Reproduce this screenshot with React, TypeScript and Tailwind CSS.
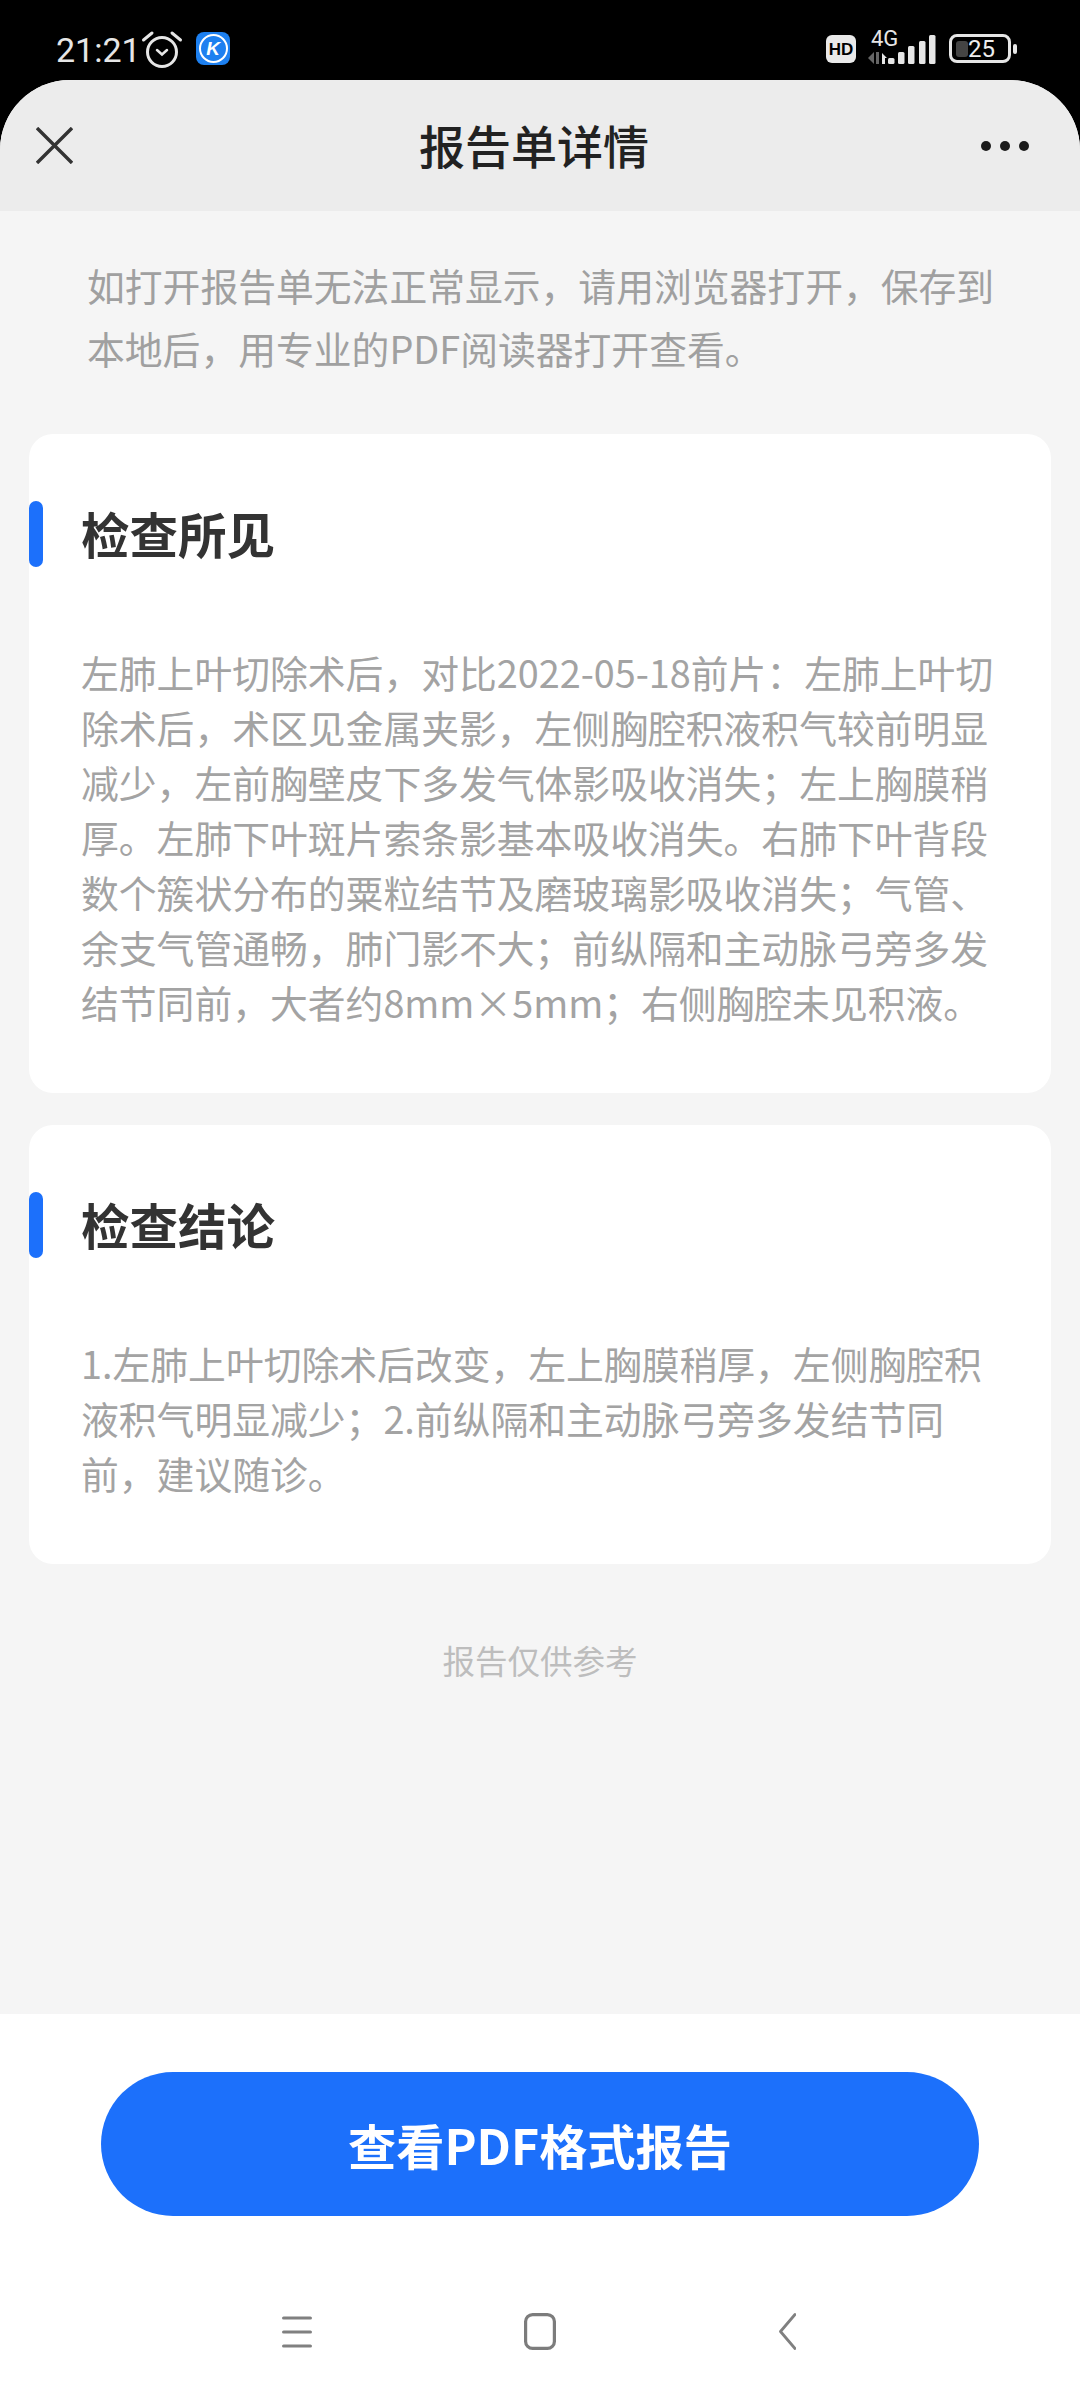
const FONT = "font-['Noto_Sans_CJK_SC','Noto_Sans',sans-serif]";

const findings = [
  "左肺上叶切除术后，对比2022-05-18前片：左肺上叶切",
  "除术后，术区见金属夹影，左侧胸腔积液积气较前明显",
  "减少，左前胸壁皮下多发气体影吸收消失；左上胸膜稍",
  "厚。左肺下叶斑片索条影基本吸收消失。右肺下叶背段",
  "数个簇状分布的粟粒结节及磨玻璃影吸收消失；气管、",
  "余支气管通畅，肺门影不大；前纵隔和主动脉弓旁多发",
  "结节同前，大者约8mm×5mm；右侧胸腔未见积液。",
];

const conclusion = [
  "1.左肺上叶切除术后改变，左上胸膜稍厚，左侧胸腔积",
  "液积气明显减少；2.前纵隔和主动脉弓旁多发结节同",
  "前，建议随诊。",
];

function StatusBar() {
  return (
    <div className="flex h-[80px] items-start pl-[56px] pr-[63px] text-[#e6e6e6]">
      <span className="mt-[28px] w-[84px] font-['Roboto',sans-serif] text-[34px] leading-[44px]">21:21</span>
      {/* alarm */}
      <svg className="mt-[30px]" width="44" height="38" viewBox="0 0 44 38" fill="none" stroke="#e6e6e6" strokeLinecap="round">
        <circle cx="22" cy="22" r="14.5" strokeWidth="3" />
        <path d="M3.5 10 L12 3 M40.5 10 L32 3" strokeWidth="3" />
        <path d="M17 20 L22 24.5 L27 20" strokeWidth="2.5" />
      </svg>
      {/* app badge */}
      <div className="relative mt-[32px] ml-[12px] flex h-[33px] w-[34px] items-center justify-center rounded-[8px] bg-[#1d80f0]">
        <div className="flex h-[29px] w-[29px] items-center justify-center rounded-full border-2 border-white">
          <span className="font-['Liberation_Sans',sans-serif] text-[19px] leading-none font-bold text-white italic">K</span>
        </div>
      </div>
      <div className="mt-[35px] ml-auto flex h-[28px] w-[30px] items-center justify-center rounded-[6px] bg-[#e9e9e9]">
        <span className="font-['Liberation_Sans',sans-serif] text-[17px] leading-none font-bold text-black">HD</span>
      </div>
      {/* 4G + signal */}
      <svg className="mt-[22px] ml-[10px]" width="70" height="44" viewBox="0 -6 70 44">
        <text x="5" y="18" fill="#e6e6e6" fontFamily="Roboto, sans-serif" fontSize="22">4G</text>
        <path d="M8 24 L8 36 L2 30 Z" fill="#666" />
        <path d="M13 24 L13 36 L10 36 L10 24 Z" fill="#666" />
        <path d="M16 25 L21 30 L19 30 L19 36 L16 36 Z" fill="#e6e6e6" />
        <rect x="22" y="30" width="6.5" height="6" rx="1.5" fill="#e6e6e6" />
        <rect x="32" y="24" width="6.5" height="12" rx="1.5" fill="#e6e6e6" />
        <rect x="42" y="18" width="6.5" height="18" rx="1.5" fill="#e6e6e6" />
        <rect x="53" y="13" width="6.5" height="23" rx="1.5" fill="#e6e6e6" />
        <rect x="63" y="7" width="6.5" height="29" rx="1.5" fill="#e6e6e6" />
      </svg>
      {/* battery */}
      <div className="relative mt-[34px] ml-[13px] flex h-[29px] w-[62px] items-center rounded-[8px] border-[3px] border-[#e6e6e6] pl-[4px]">
        <div className="h-[16px] w-[12px] rounded-[3px] bg-[#444]" />
        <span className="font-['Roboto',sans-serif] text-[24px] leading-none text-[#eee]">25</span>
      </div>
      <div className="mt-[44px] ml-[2px] h-[10px] w-[4px] rounded-[2px] bg-[#e6e6e6]" />
    </div>
  );
}

function Section({ title, lines }: { title: string; lines: string[] }) {
  return (
    <section className="mx-[29px] rounded-[24px] bg-white pt-[67px] pb-[64px]">
      <div className="flex h-[66px] items-center">
        <div className="h-[66px] w-[14px] rounded-full bg-[#1c70fb]" />
        <h2 className="-mt-[3px] ml-[38px] text-[48.5px] leading-[66px] font-bold text-[#333]">{title}</h2>
      </div>
      <div className="mt-[77px] pl-[52px] text-[37.8px] leading-[55px] text-[#a3a3a3]">
        {lines.map((l) => (
          <div key={l} className="whitespace-nowrap">{l}</div>
        ))}
      </div>
    </section>
  );
}

export default function App() {
  return (
    <div className={`flex h-[2400px] w-[1080px] flex-col bg-black ${FONT}`}>
      <StatusBar />
      <div className="flex flex-1 flex-col overflow-hidden rounded-t-[70px] bg-[#f5f5f5]">
        <header className="flex h-[131px] shrink-0 items-center bg-[#ececec] pr-[51px] pl-[36px]">
          <svg width="37" height="37" viewBox="0 0 37 37" fill="none" stroke="#333" strokeWidth="3.4">
            <path d="M1 1 L36 36 M36 1 L1 36" />
          </svg>
          <h1 className="-mt-[4px] flex-1 pl-[14px] text-center text-[46px] leading-[60px] font-medium text-[#222]">报告单详情</h1>
          <div className="flex gap-[9px]">
            <div className="h-[10px] w-[10px] rounded-full bg-[#1c1c1c]" />
            <div className="h-[10px] w-[10px] rounded-full bg-[#1c1c1c]" />
            <div className="h-[10px] w-[10px] rounded-full bg-[#1c1c1c]" />
          </div>
        </header>

        <main className="flex-1">
          <p className="px-[87px] pt-[42px] pb-[55px] text-[37.8px] leading-[63px] text-[#a0a0a0]">
            <span className="block whitespace-nowrap">如打开报告单无法正常显示，请用浏览器打开，保存到</span>
            <span className="block whitespace-nowrap">本地后，用专业的PDF阅读器打开查看。</span>
          </p>
          <div className="flex flex-col gap-[32px]">
            <Section title="检查所见" lines={findings} />
            <Section title="检查结论" lines={conclusion} />
          </div>
          <p className="mt-[72px] text-center text-[32.5px] leading-[48px] text-[#bdbdbd]">报告仅供参考</p>
        </main>

        <footer className="h-[386px] shrink-0 bg-white pt-[58px]">
          <button className="mx-auto flex h-[144px] w-[878px] items-center justify-center rounded-full bg-[#1c70fb] text-[48.2px] font-bold text-white">
            查看PDF格式报告
          </button>
          <nav className="mt-[97px] flex items-center pl-[282px]">
            <svg width="30" height="32" viewBox="0 0 30 32" fill="none" stroke="#808080" strokeWidth="3.2" strokeLinecap="round">
              <path d="M1.6 2 H28.4 M1.6 16 H28.4 M1.6 30 H28.4" />
            </svg>
            <svg className="ml-[212px]" width="32" height="37" viewBox="0 0 32 37" fill="none" stroke="#7c7c7c" strokeWidth="3.2">
              <rect x="1.6" y="1.6" width="28.8" height="33.8" rx="7" />
            </svg>
            <svg className="ml-[223px]" width="17" height="37" viewBox="0 0 17 37" fill="none" stroke="#808080" strokeWidth="2.8" strokeLinecap="round" strokeLinejoin="round">
              <path d="M16 1.5 L1.5 18.5 L16 35.5" />
            </svg>
          </nav>
        </footer>
      </div>
    </div>
  );
}
